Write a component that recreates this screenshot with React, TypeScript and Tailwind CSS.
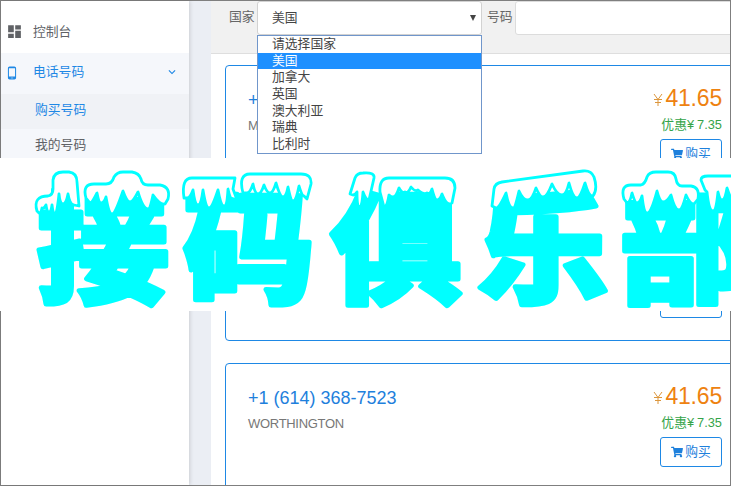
import { FaShoppingCart } from "react-icons/fa";
import { MdDashboard, MdPhoneAndroid, MdKeyboardArrowDown } from "react-icons/md";

const countries = ["请选择国家", "美国", "加拿大", "英国", "澳大利亚", "瑞典", "比利时"];

function Sidebar() {
  return (
    <nav className="relative z-10 flex w-[188px] shrink-0 flex-col bg-white text-[12.8px] text-[#606266] shadow-[1px_0_4px_rgba(0,0,0,0.14)]">
      <div className="flex h-[52px] items-center pt-[9px] pl-[5px]">
        <MdDashboard className="size-[17px]" />
        <span className="ml-[10px]">控制台</span>
      </div>
      <div className="flex h-[41px] items-center bg-[#f5f7fb] pb-[3px] pl-[4px] text-[#1e88e5]">
        <MdPhoneAndroid className="mt-px size-[14px]" />
        <span className="ml-[14px]">电话号码</span>
        <MdKeyboardArrowDown className="ml-[81px] size-[14px]" />
      </div>
      <div className="flex h-[35px] items-center bg-[#f0f2f6] pl-[34px] pb-[3px] text-[#1e88e5]">购买号码</div>
      <div className="flex h-[35px] items-center bg-[#f5f7fb] pl-[34px] pb-[3px]">我的号码</div>
    </nav>
  );
}

function Toolbar() {
  return (
    <div className="flex h-[54px] items-start border-b border-[#dedede] bg-[#f1f1f1] pt-px text-[12.8px] whitespace-nowrap text-[#666]">
      <span className="ml-[18px] w-[28px] shrink-0 pt-[6px] leading-[20px]">国家</span>
      <div className="relative shrink-0">
        <div className="flex h-[34px] w-[225px] items-center justify-between rounded-[3px] border border-[#d2d2d2] bg-white pr-[5px] pl-[14px] text-[#444]">
          <span>美国</span>
          <svg viewBox="0 0 6 6" className="size-[6px]">
            <path d="M0 0h6L3 6z" fill="#444" />
          </svg>
        </div>
        <ul className="absolute top-[34px] left-0 z-20 w-[225px] border border-[#7096cb] bg-white pb-px text-[#444]">
          {countries.map((c) => (
            <li
              key={c}
              className={
                c === "美国"
                  ? "h-[16.65px] bg-[#1e90ff] pl-[14px] leading-[15px] text-white"
                  : "h-[16.65px] pl-[14px] leading-[15px]"
              }
            >
              {c}
            </li>
          ))}
        </ul>
      </div>
      <span className="ml-[5px] w-[28px] shrink-0 pt-[6px] leading-[20px]">号码</span>
      <div className="h-[34px] w-[240px] shrink-0 rounded-[3px] border border-[#dcdcdc] bg-white" />
    </div>
  );
}

const cardClass = "flex h-[127px] w-[540px] shrink-0 rounded-[4px] border border-[#1e88e5] bg-white";
const buttonClass =
  "flex h-[30px] w-[62px] shrink-0 items-center justify-center gap-[2px] rounded-[3px] border border-[#1e88e5] text-[12.8px] text-[#1e80dc]";

function NumberCard({ phone, city }: { phone: string; city: string }) {
  return (
    <div className={cardClass}>
      <div className="w-[390px] pt-[22px] pl-[22px]">
        <div className="text-[18px] leading-[24px] text-[#1e80dc]">{phone}</div>
        <div className="mt-[2px] text-[13px] leading-[24px] tracking-[-0.3px] text-[#777]">{city}</div>
      </div>
      <div className="flex w-[106px] flex-col items-end pt-[18px]">
        <div className="flex items-baseline text-[#ee8210]">
          <svg viewBox="0 0 10 13" className="mr-[2px] h-[13px] w-[10px]" fill="none" stroke="#dc963c" strokeWidth="1">
            <path d="M1 1l4 5.5L9 1M5 6.5V13M1 6.5h8M2 9.5h6" />
          </svg>
          <span className="text-[23px] leading-[28px] tracking-[-0.2px]">41.65</span>
        </div>
        <div className="pt-px text-[12.8px] leading-[24px] text-[#35a44a]">
          优惠<span className="tracking-[3px]">¥</span>7.35
        </div>
        <div className="pt-[2px]">
          <div className={buttonClass}>
            <FaShoppingCart className="size-[12px]" />
            <span>购买</span>
          </div>
        </div>
      </div>
    </div>
  );
}

const snow = [
  "M37 211C34 201 38 196 48 196Q53 195 53 189V180Q54 172 63 172H69Q77 173 77 182L79 206L74 205Q70 205 68 194Q66 204 63 204Q60 204 59 194Q57 214 55 214Q53 214 52 205Q51 212 49 212Q47 212 46 205Q44 209 42 208Q41 213 39 213Z",
  "M86 198Q82 184 94 184H106Q112 184 114 177Q117 172 123 172H132Q139 173 141 179Q142 185 148 185H160Q171 187 168 199L165 204Q160 205 153 195Q150 209 148 209Q143 209 138 192Q133 202 130 202Q127 202 123 191Q115 214 112 214Q109 214 106 197Q104 203 101 203Q99 203 97 193Q92 203 90 203Z",
  "M184 198Q181 178 192 178H235L233 189L237 200L231 198Q230 198 228 189Q227 206 224 206Q221 206 218 190Q212 208 209 208Q206 208 203 190Q201 205 198 205Q195 205 193 190Q190 198 187 198Z",
  "M243 193Q238 174 250 174H301Q312 174 311 184L307 199L304 196Q302 196 299 186Q296 201 293 201Q291 201 288 187Q286 197 283 197Q280 197 276 183Q273 193 270 193Q267 193 264 185Q261 194 258 194Q255 194 253 184Q250 193 247 193Z",
  "M350 194L355 178Q357 173 363 173Q375 172 374 178L369 200Q366 200 363 192Q362 207 359 207Q357 207 357 192Q355 195 353 195Z",
  "M384 207L380 192Q379 178 389 178H445Q455 178 455 188L452 203Q447 207 442 194Q440 200 437 200Q435 200 432 189Q430 195 427 193Q424 195 418 190Q415 192 411 187Q408 194 405 192Q402 194 399 188Q396 197 393 197Q391 197 389 195Q387 207 384 207Z",
  "M492 206L494 189Q495 183 502 182L583 171Q591 170 594 177Q598 189 593 196Q589 197 585 183Q580 198 577 198Q573 198 569 183Q566 195 562 195Q557 195 552 184Q547 197 543 197Q540 197 536 188Q532 200 528 200Q523 200 519 191Q515 208 513 208Q509 208 506 193Q499 208 496 208Z",
  "M624 199Q620 185 631 185H641Q645 184 647 177Q649 172 656 172H668Q675 172 676 179Q677 186 682 186H691Q700 187 698 199L694 204Q690 204 686 195Q682 210 679 210Q675 210 671 195Q667 202 663 202Q660 202 657 191Q651 213 647 213Q644 213 642 196Q640 203 637 203Q635 203 632 193Q630 203 627 203Z",
  "M705 190L701 180Q701 176 708 176H735V195L731 197Q730 197 727 188Q725 200 722 200Q720 200 718 192Q716 211 713 211Q709 211 707 192Z",
];

const glyphs = [
  { g: "接", x: 103 },
  { g: "码", x: 249 },
  { g: "俱", x: 397 },
  { g: "乐", x: 543 },
  { g: "部", x: 686 },
];

function Banner() {
  return (
    <div className="absolute top-[158px] left-0 z-30 h-[153px] w-[731px] bg-white">
      <svg viewBox="0 158 731 153" className="block h-[153px] w-[731px] font-black">
        {glyphs.map(({ g, x }) => (
          <text
            key={g}
            transform={`translate(${x} 293) scale(1.09 1)`}
            textAnchor="middle"
            fontSize="121"
            fill="#00ffff"
            stroke="#00ffff"
            strokeWidth="5"
            strokeLinejoin="round"
          >
            {g}
          </text>
        ))}
        {snow.map((d) => (
          <path key={d} d={d} fill="#fff" stroke="#00ffff" strokeWidth="2.8" strokeLinejoin="round" />
        ))}
      </svg>
    </div>
  );
}

export default function App() {
  return (
    <div className="relative h-[486px] w-[731px] overflow-hidden bg-white font-['Liberation_Sans','Noto_Sans_CJK_SC',sans-serif]">
      <div className="flex h-full border border-[#7f7f7f] bg-[#ebeef4]">
        <Sidebar />
        <main className="ml-[22px] flex min-w-0 flex-1 flex-col overflow-hidden bg-white">
          <div className="-mt-px">
            <Toolbar />
          </div>
          <div className="flex flex-col gap-[22px] pt-[11px] pl-[14px]">
            <NumberCard phone="+1 (507) 369-4121" city="MANKATO" />
            <div className={cardClass}>
              <div className="flex w-[496px] items-end justify-end pb-[22px]">
                <div className={buttonClass} />
              </div>
            </div>
            <NumberCard phone="+1 (614) 368-7523" city="WORTHINGTON" />
          </div>
        </main>
      </div>
      <Banner />
    </div>
  );
}
